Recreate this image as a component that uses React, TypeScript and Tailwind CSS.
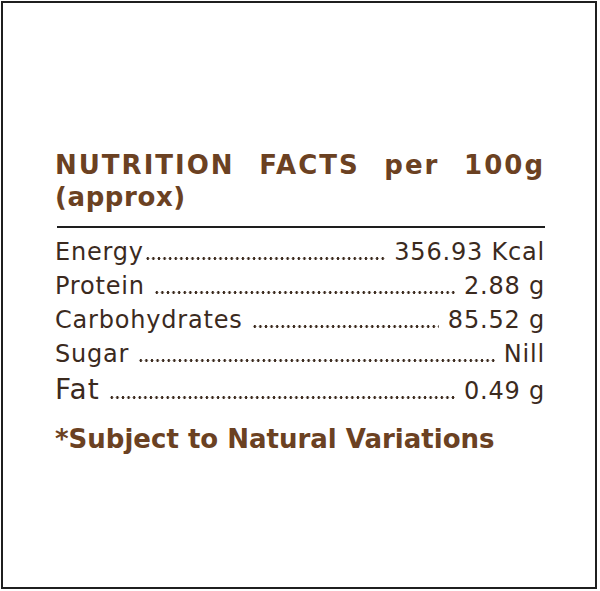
import React from "react";

const rows = [
    {label: "Energy", value: "356.93 Kcal", gap: false},
    {label: "Protein", value: "2.88 g", gap: true},
    {label: "Carbohydrates", value: "85.52 g", gap: true},
    {label: "Sugar", value: "Nill", gap: true},
    {label: "Fat", value: "0.49 g", gap: true, big: true},
];

const Row = ({label, value, gap, big}: { label: string; value: string; gap: boolean; big?: boolean }) => (
    <div className={`flex items-baseline h-[34px] leading-[34px] tracking-[0.8px] ${big ? "mt-[2px]" : ""}`}>
        <span className={`whitespace-nowrap ${big ? "text-[28px] tracking-[1px]" : "text-[24px]"}`}>{label}</span>
        <span
            className={`flex-1 h-[3px] bg-[radial-gradient(circle,#3b2a1e_1.2px,transparent_1.6px)] bg-[length:5.6px_3px] bg-repeat-x ${gap ? "ml-[9px]" : "ml-[1px]"} mr-[9px]`}/>
        <span className="whitespace-nowrap text-[24px]">{value}</span>
    </div>
);

export default function App() {
    return (
        <div className="w-[600px] h-[591px] bg-white p-[1px]">
            <div
                className="w-[596px] h-[588px] border-2 border-[#1f1f1f] bg-white pt-[146px] pl-[52px] pr-[50px]"
                style={{fontFamily: '"DejaVu Sans", "Open Sans", sans-serif'}}
            >
                <h1 className="text-[#6b4122] font-bold text-[26px] leading-[32px] tracking-[2px] text-justify [text-align-last:left]">
                    NUTRITION FACTS per 100g <span className="tracking-[0.6px]">(approx)</span>
                </h1>
                <div className="h-[2px] bg-[#1e1e1e] mt-[13px] ml-[2px]"/>
                <div className="mt-[7px] text-[#3b2a1e]">
                    {rows.map(r => <Row key={r.label} {...r}/>)}
                </div>
                <p className="text-[#6b4122] font-bold text-[26px] leading-[32px] mt-[16px]">
                    *Subject to Natural Variations
                </p>
            </div>
        </div>
    );
}
